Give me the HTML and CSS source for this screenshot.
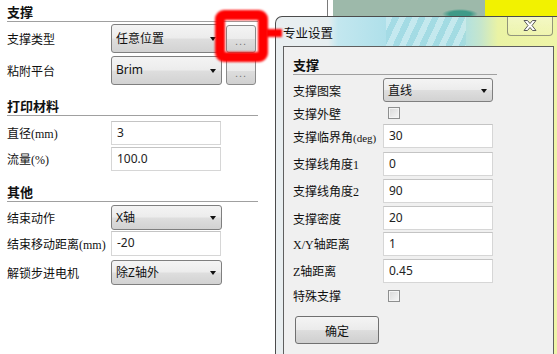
FILE: index.html
```html
<!DOCTYPE html>
<html lang="zh-CN">
<head>
<meta charset="utf-8">
<title>专业设置</title>
<link rel="stylesheet" href="styles.css">
</head>
<body>
<div class="app">
  <div class="left">
    <div class="heading h-first">支撑</div>
    <div class="row r-combo1">
      <span class="label">支撑类型</span>
      <div class="combo tall"><span class="ctext">任意位置</span><span class="arrow"></span></div>
      <div class="dots tall">...</div>
    </div>
    <div class="row r-combo2">
      <span class="label">粘附平台</span>
      <div class="combo tall"><span class="ctext lat-sans">Brim</span><span class="arrow"></span></div>
      <div class="dots tall">...</div>
    </div>

    <div class="heading h-second">打印材料</div>
    <div class="row r-in1">
      <span class="label">直径<span class="lat">(mm)</span></span>
      <div class="input">3</div>
    </div>
    <div class="row r-in2">
      <span class="label">流量<span class="lat">(%)</span></span>
      <div class="input">100.0</div>
    </div>

    <div class="heading h-third">其他</div>
    <div class="row r-c3">
      <span class="label">结束动作</span>
      <div class="combo"><span class="ctext"><span class="lat-sans">X</span>轴</span><span class="arrow"></span></div>
    </div>
    <div class="row r-in3">
      <span class="label">结束移动距离<span class="lat">(mm)</span></span>
      <div class="input">-20</div>
    </div>
    <div class="row r-c4">
      <span class="label">解锁步进电机</span>
      <div class="combo"><span class="ctext">除<span class="lat-sans">Z</span>轴外</span><span class="arrow"></span></div>
    </div>
  </div>
  <div class="view"></div>
</div>

<div class="dialog">
  <div class="titlebar">
    <span class="stripes"></span>
    <span class="title">专业设置</span>
    <div class="close">
      <svg width="16" height="13" viewBox="0 0 16 13">
        <path d="M2 1.5 L5.5 1.5 L8 4.5 L10.5 1.5 L14 1.5 L10 6.5 L14 11.5 L10.5 11.5 L8 8.5 L5.5 11.5 L2 11.5 L6 6.5 Z" fill="#ffffff" stroke="#5a5a5a" stroke-width="1" stroke-linejoin="round"/>
      </svg>
    </div>
  </div>
  <div class="client">
    <div class="dheading">支撑</div>
    <div class="drow d-combo">
      <span class="dlabel">支撑图案</span>
      <div class="combo dctl"><span class="ctext">直线</span><span class="arrow"></span></div>
    </div>
    <div class="drow d-check1">
      <span class="dlabel">支撑外壁</span>
      <span class="check"></span>
    </div>
    <div class="drow d-i1">
      <span class="dlabel">支撑临界角<span class="lat small">(deg)</span></span>
      <div class="input dctl">30</div>
    </div>
    <div class="drow d-i2">
      <span class="dlabel">支撑线角度<span class="lat">1</span></span>
      <div class="input dctl">0</div>
    </div>
    <div class="drow d-i3">
      <span class="dlabel">支撑线角度<span class="lat">2</span></span>
      <div class="input dctl">90</div>
    </div>
    <div class="drow d-i4">
      <span class="dlabel">支撑密度</span>
      <div class="input dctl">20</div>
    </div>
    <div class="drow d-i5">
      <span class="dlabel"><span class="lat">X/Y</span>轴距离</span>
      <div class="input dctl">1</div>
    </div>
    <div class="drow d-i6">
      <span class="dlabel"><span class="lat">Z</span>轴距离</span>
      <div class="input dctl">0.45</div>
    </div>
    <div class="drow d-check2">
      <span class="dlabel">特殊支撑</span>
      <span class="check"></span>
    </div>
    <div class="okbtn">确定</div>
  </div>
</div>

<div class="highlight"></div>
<div class="connector"></div>
</body>
</html>
```

FILE: styles.css
```css
html, body {
  margin: 0;
  padding: 0;
}
body {
  width: 557px;
  height: 354px;
  overflow: hidden;
  position: relative;
  font-family: "Noto Sans CJK SC", "Noto Sans", sans-serif;
  font-size: 12px;
  color: #111;
  background: #ffffff;
}

.app {
  display: flex;
  height: 354px;
}

.left {
  width: 320px;
  padding-left: 7px;
  background: #ffffff;
  border-right: 1px solid #7a7a7a;
  display: flex;
  flex-direction: column;
}

.view {
  flex: 1;
  background:
    radial-gradient(ellipse 18px 5px at 132px 14px, #3f9a88 0 60%, transparent 100%),
    linear-gradient(to right, #ffffff 0 5px, #9db9aa 5px 157px, #f2f200 157px);
}

.heading {
  width: 251px;
  height: 18px;
  line-height: 18px;
  font-weight: bold;
  font-size: 13px;
  border-bottom: 1px solid #a0a0a0;
}
.h-first { margin-top: 3px; }
.h-second { margin-top: 12px; }
.h-third { margin-top: 12px; }

.row {
  display: flex;
  align-items: center;
}
.label {
  width: 104px;
  flex: none;
  white-space: nowrap;
}
.lat {
  font-family: "Liberation Serif", serif;
  font-size: 12px;
}
.lat.small { font-size: 11px; }
.lat-sans {
  font-family: "Noto Sans", sans-serif;
}

.r-combo1 { margin-top: 2px; height: 29px; }
.r-combo2 { margin-top: 3px; height: 29px; }
.r-in1 { margin-top: 5px; height: 24px; }
.r-in2 { margin-top: 2px; height: 24px; }
.r-c3 { margin-top: 3px; height: 25px; }
.r-in3 { margin-top: 1px; height: 25px; }
.r-c4 { margin-top: 4px; height: 25px; }

.combo {
  box-sizing: border-box;
  width: 111px;
  height: 25px;
  border: 1px solid #7f7f7f;
  border-radius: 3px;
  background: linear-gradient(#f4f4f4 0%, #ececec 48%, #dedede 52%, #d2d2d2 100%);
  display: flex;
  align-items: center;
  padding: 0 5px 2px 4px;
}
.combo.tall { height: 29px; padding-bottom: 3px; }
.ctext {
  flex: 1;
  white-space: nowrap;
  color: #111;
}
.arrow {
  width: 0;
  height: 0;
  border-left: 3.5px solid transparent;
  border-right: 3.5px solid transparent;
  border-top: 4px solid #111;
  margin-top: 3px;
}

.dots {
  box-sizing: border-box;
  width: 30px;
  height: 28px;
  margin-left: 4px;
  border: 1px solid #8a8a8a;
  border-radius: 3px;
  background: linear-gradient(#f4f4f4 0%, #ececec 48%, #dddddd 52%, #d0d0d0 100%);
  color: #777;
  font-family: "Liberation Sans", sans-serif;
  font-size: 11px;
  display: flex;
  align-items: center;
  justify-content: center;
  padding-top: 4px;
  letter-spacing: 1px;
}

.input {
  box-sizing: border-box;
  width: 110px;
  height: 24px;
  border: 1px solid #d6d6d6;
  border-top-color: #c4c4c4;
  background: #ffffff;
  font-family: "Noto Sans", sans-serif;
  font-size: 12px;
  color: #222;
  padding-left: 5px;
  display: flex;
  align-items: center;
  padding-bottom: 2px;
}
.r-in3 .input { height: 25px; }

/* dialog window */
.dialog {
  position: absolute;
  left: 275px;
  top: 16px;
  width: 300px;
  height: 350px;
  box-sizing: border-box;
  border: 1px solid #4c4c4c;
  border-right: none;
  border-radius: 7px 0 0 0;
  background:
    linear-gradient(to right,
      #e9eef0 0px, #e6eef0 52px, #c3e7ef 62px, #afe0ea 110px,
      #ade0e6 185px, #c6e6cc 205px, #eaf3a4 222px, #f0f5a8 290px);
  display: flex;
  flex-direction: column;
  overflow: hidden;
}
.titlebar {
  height: 29px;
  position: relative;
  display: flex;
  align-items: center;
  padding-left: 7px;
}
.stripes {
  position: absolute;
  left: 110px;
  top: 0;
  width: 80px;
  height: 29px;
  background: repeating-linear-gradient(115deg, rgba(255,255,255,0.35) 0 6px, rgba(120,200,210,0.25) 6px 12px);
  opacity: 0.8;
}
.title {
  position: relative;
  font-size: 12.5px;
  color: #111;
  margin-top: 2px;
}
.close {
  position: absolute;
  left: 231px;
  top: -1px;
  width: 46px;
  height: 20px;
  box-sizing: border-box;
  border: 1px solid rgba(70,70,70,0.55);
  border-top: none;
  border-radius: 0 0 4px 4px;
  background: linear-gradient(rgba(255,255,255,0.35), rgba(255,255,255,0.1));
  display: flex;
  align-items: center;
  justify-content: center;
}

.client {
  margin-left: 7px;
  width: 271px;
  flex: 1;
  box-sizing: border-box;
  border: 1px solid #5f5f5f;
  border-bottom: none;
  background: #f0f0f0;
  padding-left: 9px;
  display: flex;
  flex-direction: column;
  align-items: flex-start;
}
.dheading {
  width: 204px;
  height: 18px;
  line-height: 18px;
  margin-top: 9px;
  font-weight: bold;
  font-size: 13px;
  border-bottom: 1px solid #a0a0a0;
}
.drow {
  display: flex;
  align-items: center;
}
.dlabel {
  width: 90px;
  flex: none;
  white-space: nowrap;
}
.dctl { width: 110px; height: 24px; }
.combo.dctl { padding-bottom: 1px; }

.d-combo { margin-top: 3px; height: 24px; }
.d-check1 { margin-top: 0px; height: 22px; }
.d-i1 { margin-top: 0px; height: 24px; }
.d-i2 { margin-top: 4px; height: 24px; }
.d-i3 { margin-top: 3px; height: 24px; }
.d-i4 { margin-top: 3px; height: 24px; }
.d-i5 { margin-top: 2px; height: 24px; }
.d-i6 { margin-top: 3px; height: 24px; }
.d-check2 { margin-top: 1px; height: 23px; }

.check {
  box-sizing: border-box;
  width: 12px;
  height: 12px;
  margin-left: 5px;
  border: 1px solid #8e8f8f;
  background: linear-gradient(135deg, #d8d8d8, #f6f6f6);
  box-shadow: inset 0 0 0 1px #f4f4f4;
}

.okbtn {
  box-sizing: border-box;
  margin-top: 9px;
  margin-left: 2px;
  width: 84px;
  height: 28px;
  border: 1px solid #707070;
  border-radius: 3px;
  background: linear-gradient(#f4f4f4 0%, #ebebeb 48%, #dddddd 52%, #cfcfcf 100%);
  display: flex;
  align-items: center;
  justify-content: center;
  color: #111;
}

/* red annotation */
.highlight {
  position: absolute;
  left: 215px;
  top: 10px;
  width: 53px;
  height: 52px;
  box-sizing: border-box;
  border: 10px solid #ff0000;
  border-radius: 9px;
  filter: blur(1px);
}
.connector {
  position: absolute;
  left: 266px;
  top: 29px;
  width: 16px;
  height: 8px;
  background: #ff0000;
  filter: blur(1px);
}
```
